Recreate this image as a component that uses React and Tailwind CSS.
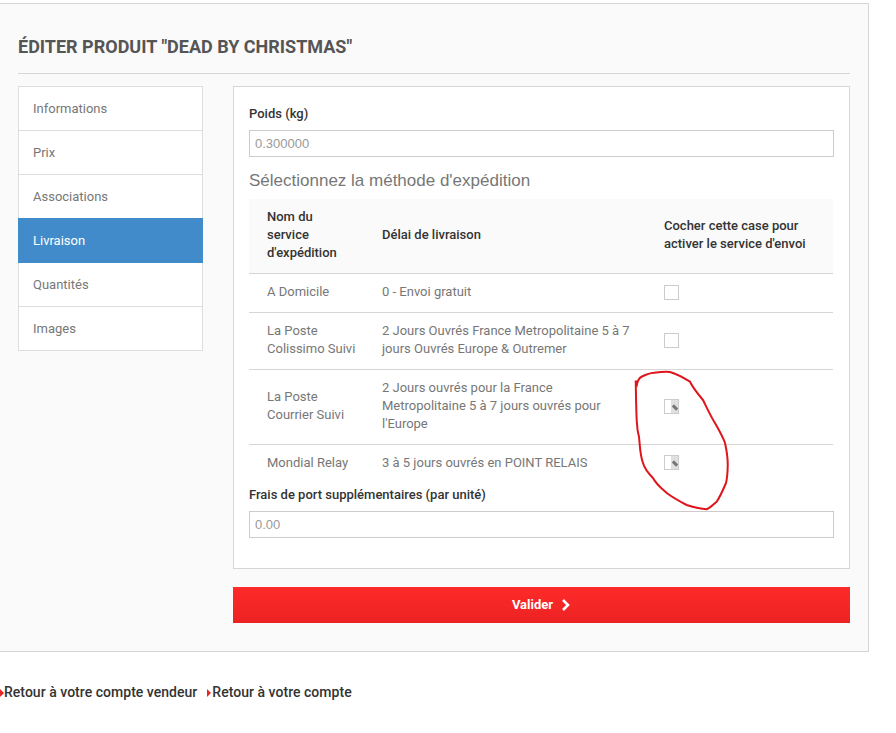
import React from 'react';

const navItems = ['Informations', 'Prix', 'Associations', 'Livraison', 'Quantités', 'Images'];

const carriers = [
    { id: 1, name: ['A Domicile'], delay: '0 - Envoi gratuit', height: 'h-[39px]', checked: false },
    { id: 2, name: ['La Poste', 'Colissimo Suivi'], delay: '2 Jours Ouvrés France Metropolitaine 5 à 7 jours Ouvrés Europe & Outremer', height: 'h-[57px]', checked: false },
    { id: 3, name: ['La Poste', 'Courrier Suivi'], delay: "2 Jours ouvrés pour la France Metropolitaine 5 à 7 jours ouvrés pour l'Europe", height: 'h-[75px]', checked: true },
    { id: 4, name: ['Mondial Relay'], delay: '3 à 5 jours ouvrés en POINT RELAIS', height: 'h-[37px]', checked: true, tight: true },
];

const CheckBox = ({ checked }) => (
    <span className="relative block w-[15px] h-[15px] border border-[#cccccc] bg-white">
        {checked && (
            <span className="absolute right-0 top-0 bottom-0 w-[7px] bg-[#e0e0e0]">
                <span className="absolute left-[1px] top-[6px] w-[6px] h-[3px] bg-[#777777] rotate-45" />
            </span>
        )}
    </span>
);

const App = () => {
    return (
        <div className="relative w-[896px] h-[733px] bg-white font-['Roboto',sans-serif] overflow-hidden">
            <div className="mt-[3px] w-[869px] h-[649px] border-t border-r border-b border-[#d6d6d6] bg-[#fafafa] pl-[18px] pr-[18px]">
                <h1 className="pt-[32px] h-[70px] text-[18px] leading-[22px] font-bold text-[#555555] border-b border-[#d6d6d6]">
                    ÉDITER PRODUIT "DEAD BY CHRISTMAS"
                </h1>

                <div className="flex mt-[12px] gap-[30px]">
                    {/* Side nav */}
                    <ul className="w-[185px] h-[265px] border border-[#dddddd] bg-white flex-none">
                        {navItems.map((item) => (
                            <li
                                key={item}
                                className={`pl-[14px] flex items-center text-[13px] border-b last:border-b-0 ${item === 'Livraison' ? 'h-[45px] -mt-px pt-[2px] bg-[#428bca] text-white border-[#428bca] -mx-px pl-[15px]' : 'h-[44px] text-[#777777] border-[#dddddd]'}`}
                            >
                                {item}
                            </li>
                        ))}
                    </ul>

                    <div className="flex-1">
                        <div className="h-[483px] border border-[#d6d6d6] bg-white px-[15px] pt-[18px]">
                            <label className="block text-[13px] leading-[17px] font-medium text-[#333333]">Poids (kg)</label>
                            <div className="mt-[8px] h-[27px] border border-[#cccccc] pl-[5px] flex items-center text-[13px] text-[#999999] font-['Liberation_Sans',sans-serif]">
                                0.300000
                            </div>
                            <h2 className="mt-[14px] text-[17px] leading-[20px] text-[#777777] font-['Liberation_Sans',sans-serif]">
                                Sélectionnez la méthode d'expédition
                            </h2>

                            <table className="mt-[8px] w-[584px] table-fixed border-collapse text-[13px] leading-[18px]">
                                <thead>
                                    <tr className="h-[74px] bg-[#fafafa] border-b border-[#d6d6d6] font-medium text-[#333333] text-left">
                                        <th className="w-[133px] pl-[18px] pr-[35px] pb-[2px] font-medium">Nom du service d'expédition</th>
                                        <th className="w-[282px] pb-[2px] font-medium">Délai de livraison</th>
                                        <th className="pb-[2px] font-medium">Cocher cette case pour activer le service d'envoi</th>
                                    </tr>
                                </thead>
                                <tbody>
                                    {carriers.map((carrier) => (
                                        <tr key={carrier.id} className={`${carrier.height} border-b last:border-b-0 border-[#d6d6d6] text-[#777777]`}>
                                            <td className={`pl-[18px] ${carrier.tight ? '' : 'pb-[2px]'}`}>
                                                {carrier.name.map((line) => (
                                                    <div key={line}>{line}</div>
                                                ))}
                                            </td>
                                            <td className={`pr-[30px] ${carrier.tight ? '' : 'pb-[2px]'}`}>{carrier.delay}</td>
                                            <td><CheckBox checked={carrier.checked} /></td>
                                        </tr>
                                    ))}
                                </tbody>
                            </table>

                            <label className="block mt-[5px] text-[13px] leading-[17px] font-medium text-[#333333]">Frais de port supplémentaires (par unité)</label>
                            <div className="mt-[8px] h-[27px] border border-[#cccccc] pl-[5px] flex items-center text-[13px] text-[#999999] font-['Liberation_Sans',sans-serif]">
                                0.00
                            </div>
                        </div>

                        <button className="mt-[18px] w-full h-[36px] flex items-center justify-center gap-[8px] bg-gradient-to-b from-[#ff2a2a] to-[#ec2222] text-white text-[13px] font-bold">
                            Valider
                            <svg width="10" height="12" viewBox="0 0 10 12" fill="none">
                                <path d="M2 1l5 5-5 5" stroke="white" strokeWidth="2.6" />
                            </svg>
                        </button>
                    </div>
                </div>
            </div>

            {/* Back links */}
            <div className="mt-[32px] flex gap-[10px] text-[14px] leading-[17px] font-medium tracking-[0.03px] text-[#333333]">
                <a className="flex items-center"><span className="w-0 h-0 border-y-[4px] border-y-transparent border-l-[4px] border-l-[#e8262c]" />Retour à votre compte vendeur</a>
                <a className="flex items-center"><span className="w-0 h-0 border-y-[4px] border-y-transparent border-l-[4px] border-l-[#e8262c] mr-px" />Retour à votre compte</a>
            </div>

            {/* Red hand-drawn circle over the screenshot */}
            <svg className="absolute left-0 top-0 pointer-events-none" width="896" height="733" fill="none">
                <path
                    d="M635.7 380.7 L637 384 C638 379 640 377.5 642 376.5 C647 374 650 373 654 372.7 C660 372 666 371.5 670 372 C677 374 684 378 690 381.7 C693 388 698 394 703 400 C707 408 711 417 715 423 C719 430 723 437 725 443 C727 452 728 460 727.7 467 C727.5 474 727 479 726 483 C723 490 720 497 716.7 501.7 C713 505 710 508 706.7 509.3 C700 509 693 507 686.7 505 C679 501 672 497 666.7 493 C661 488 656 484 653 478 C649 474 645 470 643 463 C640 455 640 446 639 437 C637 430 637 425 636.7 420 C636 405 636 392 635.7 380.7 Z"
                    stroke="#e0141c"
                    strokeWidth="2"
                />
            </svg>
        </div>
    );
};

export default App;
